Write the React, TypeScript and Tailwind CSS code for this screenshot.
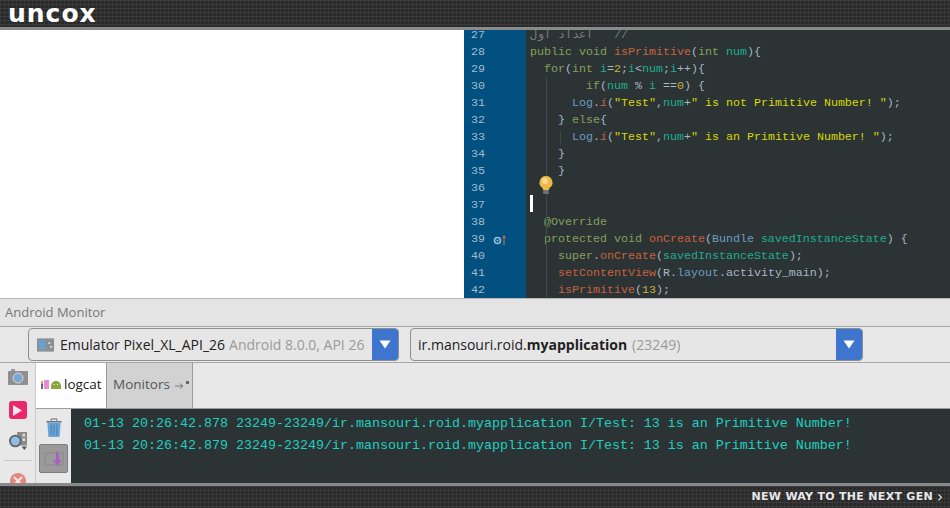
import React from "react";

const kw = "text-[#86a05a]";
const fn = "text-[#c8623c]";
const vr = "text-[#1fae8f]";
const str = "text-[#d8d800]";
const pl = "text-[#a9b7c6]";
const cls = "text-[#6e9cc0]";
const nb = "text-[#c9b23a]";

type Seg = [string, string];

const lines: { n: number; indent: number; segs: Seg[] }[] = [
  { n: 27, indent: 0, segs: [["text-[#7c7c7c]", "اعداد اول   //"]] },
  { n: 28, indent: 0, segs: [[kw, "public void "], [fn, "isPrimitive"], [pl, "("], [kw, "int "], [vr, "num"], [pl, "){"]] },
  { n: 29, indent: 2, segs: [[kw, "for"], [pl, "("], [kw, "int "], [vr, "i"], [pl, "="], [nb, "2"], [pl, ";"], [vr, "i"], [pl, "<"], [vr, "num"], [pl, ";"], [vr, "i"], [pl, "++){"]] },
  { n: 30, indent: 8, segs: [[kw, "if"], [pl, "("], [vr, "num"], [pl, " % "], [vr, "i"], [pl, " =="], [nb, "0"], [pl, ") {"]] },
  { n: 31, indent: 6, segs: [[cls, "Log"], [pl, "."], [fn + " italic", "i"], [pl, "("], [str, "\"Test\""], [pl, ","], [vr, "num"], [pl, "+"], [str, "\" is not Primitive Number! \""], [pl, ");"]] },
  { n: 32, indent: 4, segs: [[pl, "} "], [kw, "else"], [pl, "{"]] },
  { n: 33, indent: 6, segs: [[cls, "Log"], [pl, "."], [fn + " italic", "i"], [pl, "("], [str, "\"Test\""], [pl, ","], [vr, "num"], [pl, "+"], [str, "\" is an Primitive Number! \""], [pl, ");"]] },
  { n: 34, indent: 4, segs: [[pl, "}"]] },
  { n: 35, indent: 4, segs: [[pl, "}"]] },
  { n: 36, indent: 0, segs: [] },
  { n: 37, indent: 0, segs: [] },
  { n: 38, indent: 2, segs: [[kw, "@Override"]] },
  { n: 39, indent: 2, segs: [[kw, "protected void "], [fn, "onCreate"], [pl, "("], [cls, "Bundle "], [vr, "savedInstanceState"], [pl, ") {"]] },
  { n: 40, indent: 4, segs: [[kw, "super"], [pl, "."], [fn, "onCreate"], [pl, "("], [vr, "savedInstanceState"], [pl, ");"]] },
  { n: 41, indent: 4, segs: [[fn, "setContentView"], [pl, "(R."], [cls, "layout"], [pl, ".activity_main);"]] },
  { n: 42, indent: 4, segs: [[fn, "isPrimitive"], [pl, "("], [nb, "13"], [pl, ");"]] },
];

const LOG = "01-13 20:26:42.87X 23249-23249/ir.mansouri.roid.myapplication I/Test: 13 is an Primitive Number!";

const pattern =
  "bg-[#2a2a2a] bg-[linear-gradient(#3b3b3b_1px,transparent_1px),linear-gradient(90deg,#363636_1px,transparent_1px)] bg-[size:4px_4px]";

const Triangle = () => (
  <svg width="12" height="9" viewBox="0 0 12 9">
    <path d="M0.5 0.5h11L6 8.5z" fill="#fff" />
  </svg>
);

const Dropdown = ({ className, children }: { className: string; children: React.ReactNode }) => (
  <div className={`flex h-[33px] items-stretch rounded-[4px] border border-[#8f8f8f] bg-[#e6e6e6] overflow-hidden ${className}`}>
    <div className="flex flex-1 items-center whitespace-nowrap">{children}</div>
    <div className="flex w-[26px] items-center justify-center bg-[#3e76cf]">
      <Triangle />
    </div>
  </div>
);

const App = () => {
  return (
    <div className="flex h-[508px] w-[950px] flex-col overflow-hidden bg-[#e7e7e7] font-['Open_Sans',sans-serif]">
      <header className={`flex h-[30px] shrink-0 items-center border-b-[3px] border-[#8a8a8a] pl-[8px] ${pattern}`}>
        <span className="font-['DejaVu_Sans',sans-serif] text-[25px] leading-[27px] font-bold tracking-[1px] text-white">uncox</span>
      </header>

      <main className="flex h-[268px] shrink-0 bg-white">
        <div className="w-[464px] shrink-0 bg-white" />
        <div className="relative flex-1 overflow-hidden bg-[#2b3335] font-['Liberation_Mono',monospace] text-[11.67px]">
          <div className="mt-[-3px]">
            {lines.map((l) => (
              <div key={l.n} className="flex h-[17px] items-center leading-[17px]">
                <div className="flex h-full w-[62px] shrink-0 items-center gap-[8px] bg-[#02507f] pl-[7px] text-[#a3bccb]">
                  <span>{l.n}</span>
                  {l.n === 39 && (
                    <svg width="14" height="12" viewBox="0 0 14 12">
                      <circle cx="4.5" cy="6.5" r="3" fill="none" stroke="#8fc1e4" strokeWidth="1.6" />
                      <circle cx="4.5" cy="6.5" r="1" fill="#8fc1e4" />
                      <path d="M11 11V2M9.5 4L11 1.5 12.500 4" stroke="#d9703f" strokeWidth="1" fill="none" />
                    </svg>
                  )}
                </div>
                <pre className="font-['Liberation_Mono',monospace]" style={{ paddingLeft: 4 + l.indent * 7 }}>
                  {l.segs.map(([c, t], i) => (
                    <span key={i} className={c}>
                      {t}
                    </span>
                  ))}
                </pre>
              </div>
            ))}
          </div>
          {/* indent guides, bulb and caret sit over the text */}
          <div className="absolute top-[47px] bottom-0 left-[82px] w-px bg-[#3f484a]" />
          <div className="absolute top-[101px] h-[14px] left-[96px] w-px bg-[#3f484a]" />
          <svg className="absolute left-[74px] top-[145px]" width="16" height="20" viewBox="0 0 16 20">
            <path d="M8 1a6.500 6.500 0 0 0-4 11.600c.8.700 1 1.500 1 2.400h6c0-.9.200-1.700 1-2.400A6.500 6.500 0 0 0 8 1z" fill="#edb84a" />
            <circle cx="7" cy="6" r="3" fill="#f6d98a" />
            <rect x="5" y="15" width="6" height="4" rx="1.500" fill="#6d7375" />
          </svg>
          <div className="absolute left-[66px] top-[165px] h-[17px] w-[3px] bg-white" />
        </div>
      </main>

      <div className="flex h-[28px] shrink-0 items-center border-t border-[#b5b5b5] bg-[#e4e4e4] pl-[5px] text-[13px] text-[#777]">
        Android Monitor
      </div>

      <div className="flex h-[37px] shrink-0 items-center gap-[11px] border-y border-[#a8a8a8] bg-[#e7e7e7] pl-[28px]">
        <Dropdown className="w-[371px]">
          <svg className="mr-[6px] ml-[8px]" width="17" height="14" viewBox="0 0 18 14">
            <rect width="18" height="14" fill="#8b8f92" />
            <rect x="2" y="2" width="7" height="10" fill="#6aa0cf" />
            <rect x="12" y="4" width="2" height="2" fill="#ddd" />
            <rect x="14" y="8" width="2" height="2" fill="#ddd" />
          </svg>
          <span className="text-[14px] text-[#222]">Emulator Pixel_XL_API_26</span>
          <span className="ml-[4px] text-[14px] text-[#9a9a9a]">Android 8.0.0, API 26</span>
        </Dropdown>
        <Dropdown className="w-[453px]">
          <span className="ml-[7px] text-[14px] text-[#222]">
            ir.mansouri.roid.<b>myapplication</b>
          </span>
          <span className="ml-[5px] text-[14px] text-[#9a9a9a]">(23249)</span>
        </Dropdown>
      </div>

      <div className="flex min-h-0 flex-1 overflow-hidden">
        <aside className="flex w-[36px] shrink-0 flex-col items-center border-r border-[#c9c9c9] bg-[#e8e8e8] pt-[6px]">
          <svg className="shrink-0" width="20" height="16" viewBox="0 0 20 16">
            <rect x="3" y="0" width="4" height="3" fill="#9a9a9a" />
            <rect x="0" y="2" width="20" height="14" rx="1" fill="#8f8f8f" />
            <circle cx="10" cy="9" r="5" fill="#7aa8d2" stroke="#d8d8d8" strokeWidth="1" />
          </svg>
          <div className="mt-[16px] flex h-[18px] w-[18px] shrink-0 items-center justify-center rounded-[3px] bg-[#e8286a]">
            <svg width="9" height="11" viewBox="0 0 9 11">
              <path d="M0 0l9 5.500L0 11z" fill="#f8e4ea" />
            </svg>
          </div>
          <svg className="mt-[13px] shrink-0" width="20" height="18" viewBox="0 0 20 20">
            <rect x="9" y="0" width="11" height="15" fill="#8a8a8a" />
            <rect x="15" y="2" width="3" height="3" fill="#ddd" />
            <rect x="15" y="7" width="3" height="3" fill="#ddd" />
            <circle cx="7" cy="10" r="6" fill="#8fbbe0" stroke="#5f6567" strokeWidth="2" />
            <path d="M14 16h6l-3 4z" fill="#555" />
          </svg>
          <div className="mt-[10px] h-px w-[28px] shrink-0 bg-[#c8c8c8]" />
          <div className="mt-[12px] flex h-[16px] w-[16px] shrink-0 items-center justify-center rounded-full bg-[#e5867e]">
            <svg width="10" height="10" viewBox="0 0 10 10">
              <path d="M1 1l8 8M9 1l-8 8" stroke="#fbe9e7" strokeWidth="2" />
            </svg>
          </div>
        </aside>

        <div className="flex min-w-0 flex-1 flex-col">
          <div className="flex h-[46px] shrink-0 items-stretch border-b border-[#9c9c9c] bg-[#e8e8e8]">
            <div className="flex w-[70px] items-center gap-[3px] bg-white pl-[5px] pb-[2px] text-[13.5px] text-[#222]">
              <svg width="20" height="10" viewBox="0 0 20 10">
                <rect x="0" y="1" width="2" height="2.500" fill="#d9a53a" />
                <rect x="0" y="3.500" width="2" height="2.500" fill="#5a5ab0" />
                <rect x="0" y="6" width="2" height="3" fill="#8a6a30" />
                <rect x="3" y="0" width="5" height="9" fill="#e98ad6" />
                <path d="M10 9V6a4 4 0 0 1 10 0v3z" fill="#8aa63c" />
                <rect x="12.500" y="4" width="1" height="1" fill="#fff" />
                <rect x="16" y="4" width="1" height="1" fill="#fff" />
              </svg>
              logcat
            </div>
            <div className="flex w-[87px] items-center gap-[5px] border-x border-[#9c9c9c] bg-[#d2d2d2] pl-[6px] pb-[2px] text-[13.5px] text-[#555]">
              Monitors
              <svg width="16" height="10" viewBox="0 0 16 10">
                <path d="M0 6h7M5 3.500L8 6 5 8.500" stroke="#777" fill="none" />
                <rect x="11" y="1" width="3" height="3" fill="#666" />
              </svg>
            </div>
          </div>

          <div className="flex min-h-0 flex-1">
            <div className="flex w-[35px] shrink-0 flex-col items-center bg-[#e8e8e8] pt-[9px]">
              <svg className="shrink-0" width="18" height="19" viewBox="0 0 18 20">
                <path d="M1 4h16" stroke="#5c6b75" strokeWidth="1.500" />
                <path d="M6 3V1h6v2" stroke="#5c6b75" fill="none" />
                <path d="M2 5h14l-1 14a1 1 0 0 1-1 1H4a1 1 0 0 1-1-1z" fill="#6ba5d6" />
                <path d="M6 7v11M9 7v11M12 7v11" stroke="#3f7fb5" />
              </svg>
              <div className="mt-[7px] flex h-[29px] w-[29px] shrink-0 items-center justify-center rounded-[2px] border border-[#7d7d7d] bg-[#9a9a9a]">
                <svg width="20" height="18" viewBox="0 0 20 18">
                  <rect x="1" y="3" width="18" height="12" fill="none" stroke="#8a8a8a" />
                  <path d="M12 1v9h-3l4.500 6 4.500-6h-3V3z" fill="#a662c4" />
                </svg>
              </div>
            </div>
            <div className="flex-1 bg-[#2b3335] pt-[4px] pl-[13px] font-['Liberation_Mono',monospace] text-[13.33px] leading-[22px] whitespace-pre text-[#20cfc0]">
              <div>{LOG.replace("87X", "878")}</div>
              <div>{LOG.replace("87X", "879")}</div>
            </div>
          </div>
        </div>
      </div>

      <footer className={`flex h-[25px] shrink-0 items-center justify-end border-t-[3px] border-[#8a8a8a] pr-[7px] ${pattern}`}>
        <span className="font-['DejaVu_Sans',sans-serif] text-[11px] font-bold tracking-[0.3px] text-[#e8e8e8]">
          NEW WAY TO THE NEXT GEN
        </span>
        <span className="ml-[4px] font-['DejaVu_Sans',sans-serif] text-[15px] leading-none text-[#e8e8e8]">›</span>
      </footer>
    </div>
  );
};

export default App;
